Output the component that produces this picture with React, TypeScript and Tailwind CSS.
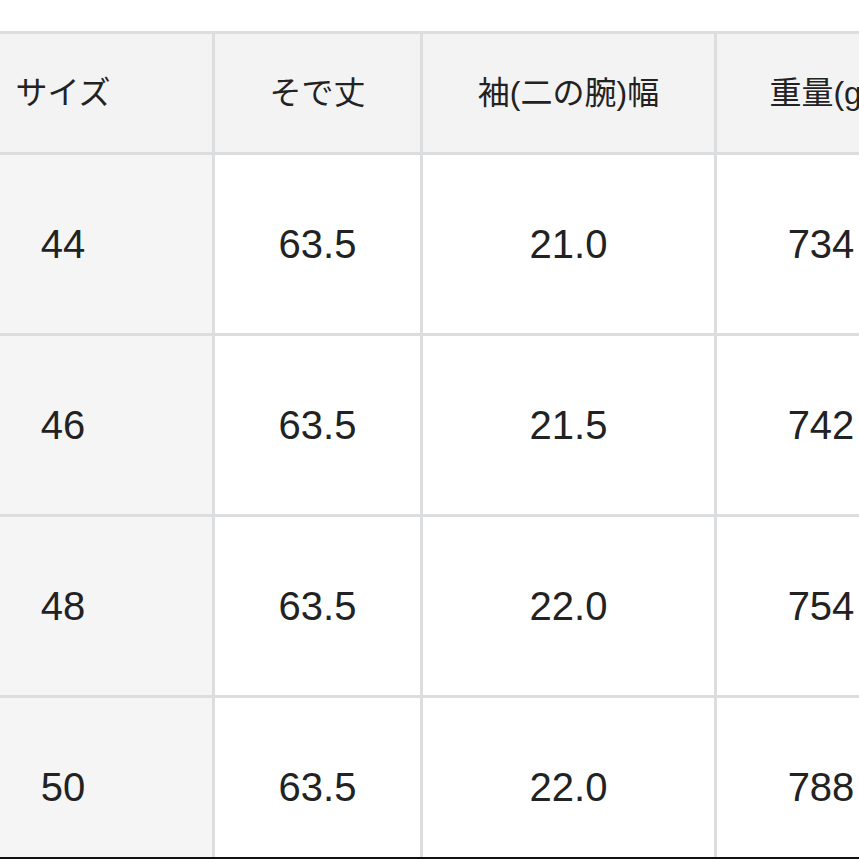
const headers = ["サイズ", "そで丈", "袖(二の腕)幅", "重量(g)"];

const rows = [
  ["44", "63.5", "21.0", "734"],
  ["46", "63.5", "21.5", "742"],
  ["48", "63.5", "22.0", "754"],
  ["50", "63.5", "22.0", "788"],
];

export default function App() {
  return (
    <div
      className="w-[859px] h-[859px] overflow-hidden bg-white flex flex-col text-[#222222]"
      style={{ fontFamily: '"Liberation Sans", "Noto Sans CJK JP", sans-serif' }}
    >
      <div className="h-[31px] shrink-0" />
      <div className="flex-1 overflow-hidden">
        <div className="ml-[-86px] w-[1013px] grid grid-cols-[298px_205px_291px_208px] grid-rows-[118px_178px_178px_178px_178px] gap-[3px] bg-[#dcdddf] border-t-[3px] border-[#dcdddf]">
          {headers.map((h) => (
            <div key={h} className="bg-[#f3f3f4] flex items-center justify-center text-[32px] whitespace-nowrap">
              {h}
            </div>
          ))}
          {rows.map((r) =>
            r.map((v, i) => (
              <div
                key={r[0] + "-" + i}
                className={`${i === 0 ? "bg-[#f5f5f5]" : "bg-white"} flex items-center justify-center text-[40px]`}
              >
                {v}
              </div>
            ))
          )}
        </div>
      </div>
      <div className="h-[2px] shrink-0 bg-[#111111]" />
    </div>
  );
}
